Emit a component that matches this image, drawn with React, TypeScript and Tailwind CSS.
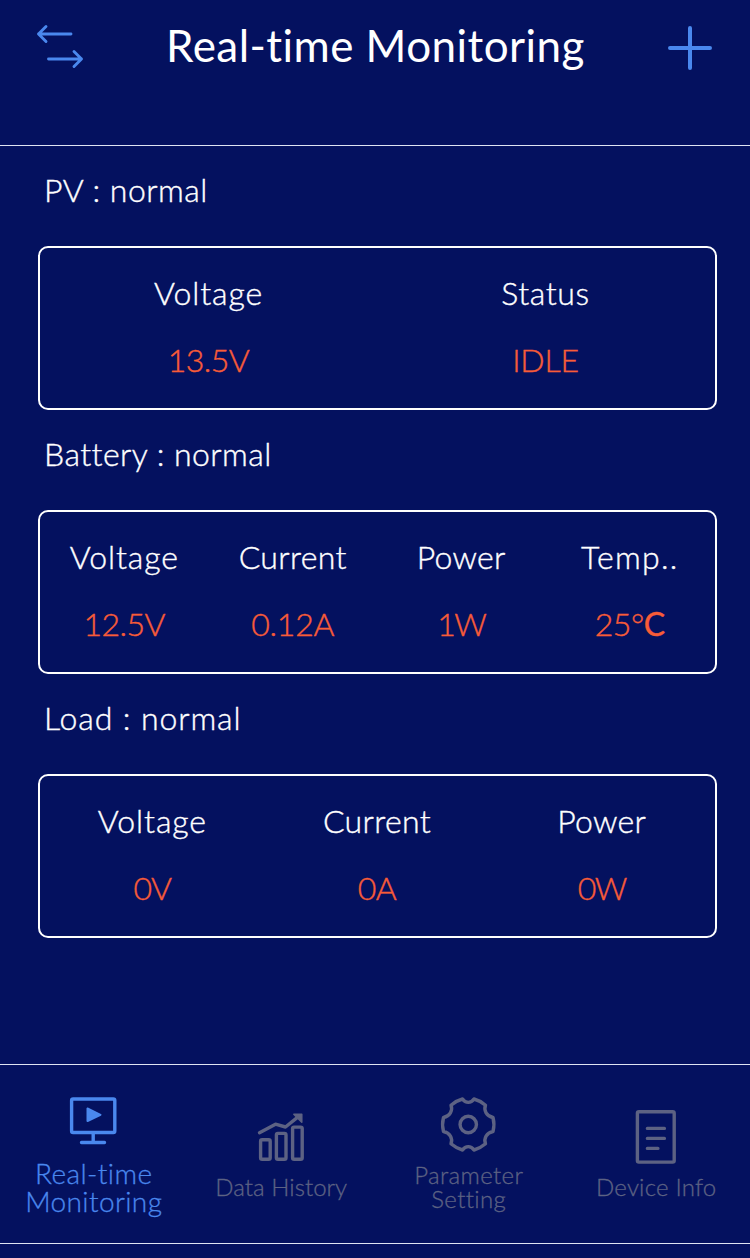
import type { ReactNode } from 'react';

type Reading = {
  label: string;
  value: ReactNode;
  labelClass: string;
  valueClass: string;
};

type Section = {
  title: string;
  titleClass: string;
  readings: Reading[];
};

const sections: Section[] = [
  {
    title: 'PV : normal',
    titleClass: 'tracking-[0.5px]',
    readings: [
      { label: 'Voltage', value: '13.5V', labelClass: 'tracking-[0.9px]', valueClass: 'tracking-[-0.5px]' },
      { label: 'Status', value: 'IDLE', labelClass: 'tracking-[0.6px]', valueClass: 'tracking-[-0.2px]' },
    ],
  },
  {
    title: 'Battery : normal',
    titleClass: 'tracking-[0.45px]',
    readings: [
      { label: 'Voltage', value: '12.5V', labelClass: 'tracking-[0.9px]', valueClass: 'tracking-[-0.5px]' },
      { label: 'Current', value: '0.12A', labelClass: 'tracking-[0.35px]', valueClass: 'tracking-[-0.2px]' },
      { label: 'Power', value: '1W', labelClass: 'tracking-[0.3px]', valueClass: 'tracking-[-1.5px]' },
      {
        label: 'Temp..',
        value: <>25°<span className="font-normal">C</span></>,
        labelClass: 'tracking-[1.3px]',
        valueClass: 'tracking-[-0.4px]',
      },
    ],
  },
  {
    title: 'Load : normal',
    titleClass: 'tracking-[0.9px]',
    readings: [
      { label: 'Voltage', value: '0V', labelClass: 'tracking-[0.9px]', valueClass: 'tracking-[-1px]' },
      { label: 'Current', value: '0A', labelClass: 'tracking-[0.35px]', valueClass: 'tracking-[-0.5px]' },
      { label: 'Power', value: '0W', labelClass: 'tracking-[0.3px]', valueClass: 'tracking-[-1.5px]' },
    ],
  },
];

function SwapIcon() {
  return (
    <svg width="48" height="46" viewBox="0 0 48 46" fill="none" stroke="currentColor" strokeWidth="2.9" strokeLinecap="round" strokeLinejoin="round">
      <path d="M35 11H2.5M10 3.5L2.5 11l7.5 7.5M12.5 36h33M38 28.5l7.5 7.500-7.5 7.5" />
    </svg>
  );
}

function TabIcon({ children }: { children: ReactNode }) {
  return (
    <svg width="60" height="60" viewBox="0 0 60 60" fill="none" stroke="currentColor" strokeWidth="3.4" strokeLinecap="round" strokeLinejoin="round" className="mb-[9px] shrink-0">
      {children}
    </svg>
  );
}

function Tab({ icon, label, active, textClass }: { icon: ReactNode; label: ReactNode; active?: boolean; textClass: string }) {
  return (
    <button className={`flex-1 flex flex-col items-center justify-center ${active ? 'text-[#4a88ee]' : 'text-[#5d6283]'}`}>
      <TabIcon>{icon}</TabIcon>
      <span className={`text-center whitespace-nowrap ${textClass}`}>{label}</span>
    </button>
  );
}

export default function App() {
  return (
    <div className="h-[1258px] w-[750px] flex flex-col bg-[#04115f] font-['Lato',sans-serif] font-light text-white overflow-hidden">
      {/* Header */}
      <header className="h-[146px] border-b border-[#dfe4f2] flex items-start justify-between pl-9 pr-[37px] pt-[21px]">
        <button className="w-[48px] pt-[2px] text-[#4a88ee]">
          <SwapIcon />
        </button>
        <h1 className="text-[44px] leading-[48px] font-normal tracking-[0.45px] whitespace-nowrap">Real-time Monitoring</h1>
        <button className="text-[#4a88ee] pt-[4px]">
          <svg width="46" height="46" viewBox="0 0 46 46" stroke="currentColor" strokeWidth="4" strokeLinecap="round">
            <path d="M23 3v40M3 23h40" />
          </svg>
        </button>
      </header>

      {/* Readings */}
      <main className="flex-1 pl-[38px] pr-[33px] [-webkit-text-stroke:0.4px_currentColor]">
        {sections.map((section) => (
          <section key={section.title}>
            <h2 className={`h-[100px] pl-1.5 pt-6 text-[32px] leading-[40px] ${section.titleClass}`}>{section.title}</h2>
            <div className="h-[164px] flex rounded-[10px] border-2 border-white pt-[25px] pr-px">
              {section.readings.map((reading) => (
                <div key={reading.label} className="flex-1 flex flex-col items-center gap-[27px] text-[32px] leading-[40px]">
                  <span className={reading.labelClass}>{reading.label}</span>
                  <span className={`text-[#f85c38] ${reading.valueClass}`}>{reading.value}</span>
                </div>
              ))}
            </div>
          </section>
        ))}
      </main>

      {/* Tab bar */}
      <nav className="h-[180px] mb-[14px] flex border-y border-[#dfe4f2] pb-[3px] [-webkit-text-stroke:0.3px_currentColor]">
        <Tab
          active
          label={<>Real-time<br />Monitoring</>}
          textClass="text-[28px] leading-[28px] tracking-[0.4px]"
          icon={
            <>
              <rect x="7.6" y="9" width="43.2" height="33.5" rx="1.5" />
              <path d="M29.2 43v9M17.5 52.5h23" />
              <path d="M23.5 18.5v12.5l13-6.2z" fill="currentColor" strokeWidth="2" />
            </>
          }
        />
        <Tab
          label="Data History"
          textClass="text-[24px] leading-[24px] tracking-[0.05px]"
          icon={
            <>
              <rect x="9.6" y="33.7" width="9.6" height="19.5" rx="1.5" />
              <rect x="25.4" y="27.4" width="9.6" height="25.8" rx="1.5" />
              <rect x="41.6" y="21.1" width="9.6" height="32.1" rx="1.5" />
              <path d="M8.5 26.7L24.500 18.200l10 2.800L48 10.200" />
              <path d="M42.800 8.200h8v8z" fill="currentColor" strokeWidth="1.5" />
            </>
          }
        />
        <Tab
          label={<>Parameter<br />Setting</>}
          textClass="text-[24px] leading-[24px] tracking-[0.35px]"
          icon={
            <>
              <circle cx="29.25" cy="30.5" r="8.2" />
              <path d="M23.5 5C26.5 9.500 32 9.500 35 5C39.500 6.200 43 8.200 46.500 11.200C44.500 16.500 47.500 22.200 54 23.500C55.200 28 55.200 33 54 37.500C47.500 38.800 44.500 44.500 46.500 49.800C43 52.800 39.500 54.800 35 56C32 51.500 26.500 51.500 23.500 56C19 54.800 15.500 52.800 12 49.800C14 44.500 11 38.800 4.500 37.500C3.300 33 3.300 28 4.500 23.500C11 22.200 14 16.500 12 11.200C15.500 8.200 19 6.200 23.500 5z" />
            </>
          }
        />
        <Tab
          label="Device Info"
          textClass="text-[24px] leading-[24px] tracking-[0.2px]"
          icon={
            <>
              <rect x="11.4" y="5.700" width="36.8" height="50.4" rx="1.5" />
              <path d="M21.4 22.4h17M21.4 32.4h17M21.4 42.4h10.5" />
            </>
          }
        />
      </nav>
    </div>
  );
}
